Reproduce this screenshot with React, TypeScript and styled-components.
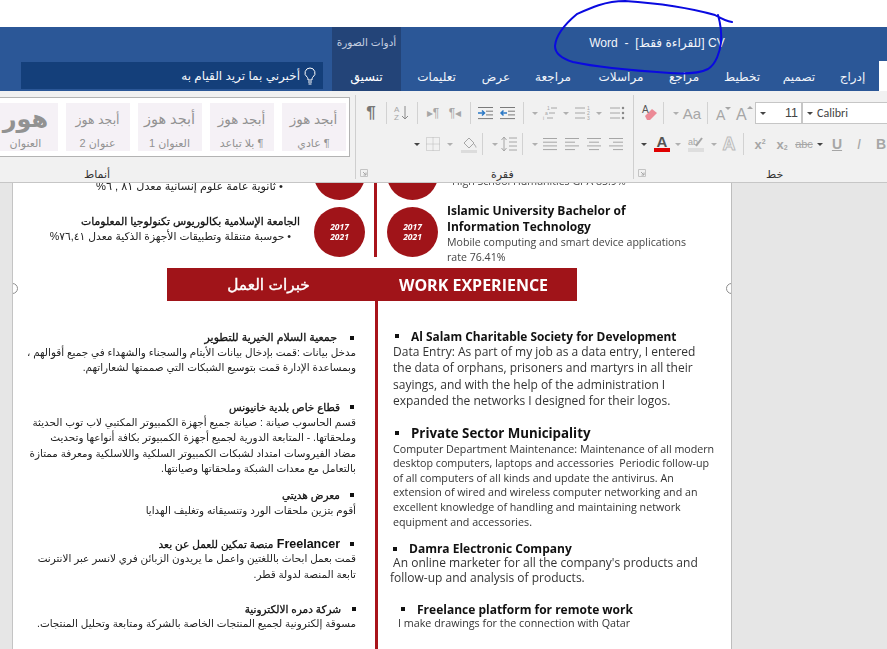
import React from 'react'
import styled, { createGlobalStyle } from 'styled-components'

const Global = createGlobalStyle`
html,body{margin:0;padding:0;width:887px;height:649px;overflow:hidden;background:#fff;}
*{box-sizing:border-box;}
`
const arabic = `"Liberation Sans","DejaVu Sans",sans-serif`
const latin = `"Open Sans","DejaVu Sans",sans-serif`

const Screen = styled.div`
position:relative;
width:887px;
height:649px;
overflow:hidden;
display:flex;
flex-direction:column;
font-family:${arabic};
`
const Blank = styled.div`height:27px;background:#fff;flex:none;`
const Bar = styled.div`
display:flex;
height:64px;
flex:none;
background:#2b5797;
color:#fff;
`
const SearchArea = styled.div`
width:332px;
display:flex;
align-items:flex-end;
padding:0 9px 2px 21px;
`
const Search = styled.div`
width:302px;
height:27px;
background:#143f7a;
display:flex;
align-items:center;
gap:3px;
padding-right:6px;
direction:rtl;
font-size:12px;
color:#f4f6fa;
`
const Context = styled.div`
width:69px;
background:#234478;
display:flex;
flex-direction:column;
align-items:center;
`
const ContextLabel = styled.div`
height:34px;
display:flex;
align-items:center;
direction:rtl;
font-size:10.5px;
color:#c5cfe0;
padding-bottom:4px;
`
const ContextTab = styled.div`
height:30px;
display:flex;
align-items:center;
font-size:12.5px;
color:#fff;
`
const BarMain = styled.div`
flex:1;
display:flex;
flex-direction:column;
`
const Title = styled.div`
height:34px;
display:flex;
align-items:center;
justify-content:center;
padding:0 0 3px 26px;
direction:rtl;
font-size:12.1px;
color:#f2f5fa;
white-space:pre;
`
const Tabs = styled.div`
height:30px;
display:flex;
direction:rtl;
`
const HomeTab = styled.div`width:8px;background:#fff;`
const Tab = styled.div<{ $w: number }>`
width:${p => p.$w}px;
display:flex;
align-items:center;
justify-content:center;
font-size:12px;
color:#f2f5fa;
padding-top:1px;
`

const Ribbon = styled.div`
height:92px;
flex:none;
background:#f1f1f1;
border-bottom:1px solid #c6c6c6;
display:flex;
overflow:hidden;
`
const Group = styled.div<{ $w: number }>`
position:relative;
flex:none;
width:${p => p.$w}px;
display:flex;
flex-direction:column;
`
const GroupSep = styled.div`
position:absolute;
right:0;
top:4px;
bottom:3px;
width:1px;
background:#cfcfcf;
`
const GroupLabel = styled.div<{ $x: number }>`
position:absolute;
top:76px;
left:${p => p.$x}px;
font-size:11px;
color:#333;
line-height:14px;
direction:rtl;
`
const Launcher = styled.svg`
position:absolute;
left:4px;
top:78px;
`
const Gallery = styled.div`
margin:6px 0 0 -59px;
width:409px;
height:60px;
border:1.5px solid #b3b3b3;
background:#fff;
display:flex;
direction:rtl;
gap:8px;
padding:4.5px 3.5px 0;
overflow:hidden;
`
const Style = styled.div`
flex:none;
width:64px;
height:48px;
background:#f5f1f6;
color:#929292;
display:flex;
flex-direction:column;
align-items:center;
white-space:nowrap;
`
const Sample = styled.div<{ $size: number; $bold?: boolean }>`
height:33px;
display:flex;
align-items:center;
font-size:${p => p.$size}px;
font-weight:${p => (p.$bold ? 700 : 400)};
`
const StyleName = styled.div`font-size:11px;line-height:14px;`

const Row = styled.div<{ $pl: number; $mt: number }>`
height:22px;
margin-top:${p => p.$mt}px;
padding-left:${p => p.$pl}px;
display:flex;
align-items:center;
`
const Slot = styled.div<{ $w?: number; $ml?: number; $size?: number; $color?: string; $bold?: boolean; $italic?: boolean }>`
flex:none;
width:${p => p.$w ?? 18}px;
margin-left:${p => p.$ml ?? 0}px;
height:22px;
display:flex;
align-items:center;
justify-content:center;
font-family:"Liberation Sans",sans-serif;
font-size:${p => p.$size ?? 14}px;
font-weight:${p => (p.$bold ? 700 : 400)};
font-style:${p => (p.$italic ? 'italic' : 'normal')};
color:${p => p.$color ?? '#a6a6a6'};
white-space:nowrap;
`
const OutlineA = styled.span`
font-size:18px;
font-weight:700;
color:#f1f1f1;
-webkit-text-stroke:1px #bcbcbc;
`
const Sup = styled.span`font-size:7px;margin-top:-6px;`
const Sub = styled.span`font-size:7px;margin-top:6px;`
const Sep = styled.div`
flex:none;
width:1px;
height:22px;
margin:0 4px;
background:#d2d2d2;
`
const Caret = styled.div<{ $ml?: number; $dark?: boolean }>`
flex:none;
width:10px;
margin-left:${p => p.$ml ?? 0}px;
height:22px;
display:flex;
align-items:center;
justify-content:center;
&::after{
  content:'';
  border-left:3px solid transparent;
  border-right:3px solid transparent;
  border-top:3px solid ${p => (p.$dark ? '#444' : '#b0b0b0')};
}
`
const SizeBox = styled.div`
flex:none;
width:47px;
height:22px;
margin-left:1px;
background:#fff;
border:1px solid #c6c6c6;
display:flex;
align-items:center;
justify-content:space-between;
padding:0 3px 0 2px;
font-family:"Liberation Sans",sans-serif;
font-size:12.5px;
color:#444;
`
const FontBox = styled.div`
flex:none;
width:120px;
height:22px;
background:#fff;
border:1px solid #c6c6c6;
border-right:none;
display:flex;
align-items:center;
gap:2px;
padding-left:2px;
font-family:"Carlito","Open Sans",sans-serif;
font-size:12px;
color:#444;
`

const Doc = styled.div`
flex:1;
min-height:0;
background:#e6e6e6;
padding:0 155px 0 12px;
`
const Page = styled.div`
position:relative;
width:720px;
height:100%;
background:#fff;
border-left:1px solid #c4c4c4;
border-right:1px solid #bdbdbd;
overflow:hidden;
filter:blur(0.3px);
`
const Handle = styled.div<{ $side: 'left' | 'right' }>`
position:absolute;
top:100px;
${p => p.$side}:-6px;
width:11px;
height:11px;
border-radius:50%;
border:1.5px solid #8e8e8e;
background:#fff;
`
const Columns = styled.div<{ $top?: number; $minH?: number }>`
display:grid;
grid-template-columns:361px 1fr;
margin-top:${p => p.$top ?? 0}px;
min-height:${p => p.$minH ?? 0}px;
`
const Side = styled.div<{ $inset?: number }>`
direction:rtl;
padding-right:${p => p.$inset ?? 9}px;
`
const LtrSide = styled.div<{ $pl: number; $ml?: number }>`
direction:ltr;
padding-left:${p => p.$pl}px;
margin-left:${p => p.$ml ?? 0}px;
border-left:3px solid #a8141b;
min-width:0;
`
const EduRow = styled.div<{ $mt?: number; $gap?: number }>`
display:flex;
gap:${p => p.$gap ?? 14}px;
margin-top:${p => p.$mt ?? 0}px;
height:50px;
`
const Badge = styled.div`
flex:none;
width:51px;
height:50px;
border-radius:50%;
background:#a01419;
color:#fff;
direction:ltr;
display:flex;
flex-direction:column;
align-items:center;
justify-content:center;
font-family:${latin};
font-size:8.5px;
font-weight:700;
font-style:italic;
line-height:10.5px;
`
const EduText = styled.div<{ $mt?: number }>`
display:flex;
flex-direction:column;
margin-top:${p => p.$mt ?? 0}px;
`
const EduHead = styled.div`
font-size:10.8px;
-webkit-text-stroke:.3px #111;
line-height:15px;
color:#111;
white-space:nowrap;
`
const EduLine = styled.div<{ $pr: number; $size: number }>`
font-size:${p => p.$size}px;
line-height:15px;
padding-right:${p => p.$pr}px;
color:#222;
white-space:nowrap;
`
const EduTitle = styled.div`
font-family:${latin};
font-size:12px;
font-weight:700;
line-height:16px;
color:#111;
white-space:nowrap;
`
const EduNote = styled.div`
font-family:${latin};
font-size:10.6px;
line-height:15px;
color:#444;
white-space:nowrap;
`
const Banner = styled.div`
display:flex;
height:33px;
width:410px;
margin:11px 0 0 154px;
background:#a01419;
color:#fff;
`
const BannerAr = styled.div`
width:207px;
display:flex;
align-items:center;
justify-content:center;
direction:rtl;
font-size:15.4px;
-webkit-text-stroke:.4px #fff;
padding-right:4px;
`
const BannerEn = styled.div`
width:199px;
display:flex;
align-items:center;
justify-content:center;
font-family:${latin};
font-size:16px;
font-weight:700;
`
const Item = styled.div<{ $mt: number }>`
margin-top:${p => p.$mt}px;
`
const headBase = `
display:flex;
align-items:center;
color:#111;
white-space:nowrap;
&::before{
  content:'';
  flex:none;
  width:4px;
  height:4px;
  background:#111;
}
`
const ArHead = styled.div<{ $bullet: number; $gap: number; $size: number }>`
${headBase}
height:15px;
padding-right:${p => p.$bullet}px;
gap:${p => p.$gap}px;
font-size:${p => p.$size}px;
-webkit-text-stroke:.3px #111;
`
const LatinBit = styled.span`
font-size:12.5px;
font-weight:700;
-webkit-text-stroke:0;
`
const EnHead = styled.div<{ $bullet: number; $gap: number; $size: number; $h: number }>`
${headBase}
height:${p => p.$h}px;
padding-left:${p => p.$bullet}px;
gap:${p => p.$gap}px;
font-family:${latin};
font-size:${p => p.$size}px;
font-weight:700;
`
const ArLine = styled.div`
font-size:10.4px;
line-height:15.4px;
color:#222;
white-space:nowrap;
`
const EnLine = styled.div<{ $size: number; $lh: number; $pad?: number }>`
font-family:${latin};
font-size:${p => p.$size}px;
line-height:${p => p.$lh}px;
margin-left:${p => p.$pad ?? 0}px;
color:#333;
white-space:pre;
`
const Scribble = styled.svg`
position:absolute;
left:0;
top:0;
pointer-events:none;
`

const Ic = ({ children, w = 18, h = 18 }: { children: React.ReactNode; w?: number; h?: number }) => (
  <svg width={w} height={h} viewBox={`0 0 ${w} ${h}`} fill="none">{children}</svg>
)

const TextLines = ({ ys, color = '#a6a6a6' }: { ys: [number, number][]; color?: string }) => (
  <>
    {ys.map(([x1, x2], i) => (
      <line key={i} x1={x1} x2={x2} y1={3.5 + i * 3.7} y2={3.5 + i * 3.7} stroke={color} />
    ))}
  </>
)

const full: [number, number][] = [[2, 16], [2, 16], [2, 16], [2, 16]]
const left: [number, number][] = [[2, 16], [2, 12], [2, 16], [2, 12]]
const center: [number, number][] = [[2, 16], [4, 14], [2, 16], [4, 14]]
const right: [number, number][] = [[2, 16], [6, 16], [2, 16], [6, 16]]

const Launch = () => (
  <Launcher width="8" height="8" viewBox="0 0 8 8" fill="none">
    <path d="M.5 7.5V.5h7v7z" stroke="#c4c4c4" />
    <path d="M3 3l3 3M6 3.5V6H3.5" stroke="#a8a8a8" />
  </Launcher>
)

const styles = [
  { sample: 'أبجد هوز', name: '¶ عادي', size: 13.5 },
  { sample: 'أبجد هوز', name: '¶ بلا تباعد', size: 13.5 },
  { sample: 'أبجد هوز', name: 'العنوان 1', size: 14.5 },
  { sample: 'أبجد هوز', name: 'عنوان 2', size: 12.5 },
  { sample: 'هور', name: 'العنوان', size: 24, bold: true },
]

const tabs: [string, number][] = [
  ['إدراج', 53], ['تصميم', 54], ['تخطيط', 60], ['مراجع', 56],
  ['مراسلات', 70], ['مراجعة', 66], ['عرض', 48], ['تعليمات', 71],
]

const arabicWork: { title: string; lead?: string; mt: number; bullet: number; gap: number; size: number; lines: string[] }[] = [
  { title: 'جمعية السلام الخيرية للتطوير', mt: 29, bullet: 2, gap: 13, size: 11, lines: ['مدخل بيانات :قمت بإدخال بيانات الأيتام والسجناء والشهداء في جميع أقوالهم ،', 'وبمساعدة الإدارة قمت بتوسيع الشبكات التي صممتها لشعاراتهم.'] },
  { title: 'قطاع خاص بلدية خانيونس', mt: 24, bullet: 2, gap: 10, size: 10.4, lines: ['قسم الحاسوب صيانة : صيانة جميع أجهزة الكمبيوتر المكتبي لاب توب الحديثة', 'وملحقاتها. - المتابعة الدورية لجميع أجهزة الكمبيوتر بكافة أنواعها وتحديث', 'مضاد الفيروسات امتداد لشبكات الكمبيوتر السلكية واللاسلكية ومعرفة ممتازة', 'بالتعامل مع معدات الشبكة وملحقاتها وصيانتها.'] },
  { title: 'معرض هديتي', mt: 11.5, bullet: 2, gap: 10, size: 10.5, lines: ['أقوم بتزين ملحقات الورد وتنسيقاته وتغليف الهدايا'] },
  { title: 'منصة تمكين للعمل عن بعد', lead: 'Freelancer', mt: 18, bullet: 2, gap: 10, size: 10.5, lines: ['قمت بعمل ابحاث باللغتين واعمل ما يريدون الزبائن فري لانسر عبر الانترنت', 'تابعة المنصة لدولة قطر.'] },
  { title: 'شركة دمره الالكترونية', mt: 19, bullet: -2, gap: 11, size: 10.5, lines: ['مسوقة إلكترونية لجميع المنتجات الخاصة بالشركة ومتابعة وتحليل المنتجات.'] },
]

const englishWork: { title: string; mt: number; bullet: number; gap: number; head: number; h: number; size: number; lh: number; back?: number; lines: string[] }[] = [
  { title: 'Al Salam Charitable Society for Development', mt: 26, bullet: 2, gap: 12, head: 11.9, h: 17, size: 12, lh: 16.4, lines: ['Data Entry: As part of my job as a data entry, I entered', 'the data of orphans, prisoners and martyrs in all their', 'sayings, and with the help of the administration I', 'expanded the networks I designed for their logos.'] },
  { title: 'Private Sector Municipality', mt: 15, bullet: 2, gap: 12, head: 13.3, h: 17, size: 10.7, lh: 14.6, lines: ['Computer Department Maintenance: Maintenance of all modern', 'desktop computers, laptops and accessories  Periodic follow-up', 'of all computers of all kinds and update the antivirus. An', 'extension of wired and wireless computer networking and an', 'excellent knowledge of handling and maintaining network', 'equipment and accessories.'] },
  { title: 'Damra Electronic Company', mt: 12, bullet: -1, gap: 12, head: 12, h: 15, size: 12, lh: 14.6, back: -3, lines: [' An online marketer for all the company\'s products and', 'follow-up and analysis of products.'] },
  { title: 'Freelance platform for remote work', mt: 17, bullet: 8, gap: 12, head: 12, h: 14, size: 10.75, lh: 14.6, back: 5, lines: ['I make drawings for the connection with Qatar'] },
]

const App = () => {
  return (
    <Screen>
      <Global />
      <Blank />
      <Bar>
        <SearchArea>
          <Search>
            <Ic w={14} h={20}>
              <path d="M7 2a5 5 0 0 0-3 9c.8.7 1 1.5 1 3h4c0-1.500.2-2.300 1-3a5 5 0 0 0-3-9z" stroke="#fff" />
              <path d="M5 16h4M5.500 18h3" stroke="#fff" />
            </Ic>
            <span>أخبرني بما تريد القيام به</span>
          </Search>
        </SearchArea>
        <Context>
          <ContextLabel>أدوات الصورة</ContextLabel>
          <ContextTab>تنسيق</ContextTab>
        </Context>
        <BarMain>
          <Title>CV [للقراءة فقط]  -  Word</Title>
          <Tabs>
            <HomeTab />
            {tabs.map(([label, w]) => <Tab key={label} $w={w}>{label}</Tab>)}
          </Tabs>
        </BarMain>
      </Bar>

      <Ribbon>
        <Group $w={356}>
          <Gallery>
            {styles.map(s => (
              <Style key={s.name}>
                <Sample $size={s.size} $bold={s.bold}>{s.sample}</Sample>
                <StyleName>{s.name}</StyleName>
              </Style>
            ))}
          </Gallery>
          <GroupLabel $x={84}>أنماط</GroupLabel>
          <GroupSep />
        </Group>

        <Group $w={278}>
          <Row $pl={4} $mt={11}>
            <Slot $w={22} $size={17} $bold $color="#777">¶</Slot>
            <Sep />
            <Slot $w={22}>
              <Ic>
                <text x="1" y="8" fontSize="8" fill="#a6a6a6" fontFamily="Liberation Sans">A</text>
                <text x="1" y="16" fontSize="8" fill="#a6a6a6" fontFamily="Liberation Sans">Z</text>
                <path d="M12 2v13M9 12l3 3 3-3" stroke="#8a8a8a" />
              </Ic>
            </Slot>
            <Sep />
            <Slot $w={22} $size={12}>▸¶</Slot>
            <Slot $w={22} $size={12}>¶◂</Slot>
            <Sep />
            <Slot $w={22}>
              <Ic>
                <TextLines ys={[[1, 16], [9, 16], [9, 16], [1, 16]]} color="#7a7a7a" />
                <path d="M1 9h6M5 6.500L7.500 9 5 11.500" stroke="#2b78c5" strokeWidth="1.500" />
              </Ic>
            </Slot>
            <Slot $w={22}>
              <Ic>
                <TextLines ys={[[1, 16], [9, 16], [9, 16], [1, 16]]} color="#7a7a7a" />
                <path d="M8 9H2M4.500 6.500L2 9l2.500 2.500" stroke="#2b78c5" strokeWidth="1.500" />
              </Ic>
            </Slot>
            <Sep />
            <Caret $ml={2} />
            <Slot>
              <Ic>
                <text x="7" y="6" fontSize="5" fill="#a6a6a6">1</text>
                <text x="5" y="11" fontSize="5" fill="#a6a6a6">a</text>
                <text x="3" y="16" fontSize="5" fill="#a6a6a6">i</text>
                <path d="M11 4h6M9 9h6M7 14h6" stroke="#a6a6a6" />
              </Ic>
            </Slot>
            <Caret $ml={3} />
            <Slot $ml={3}>
              <Ic>
                <path d="M1 4h10M1 9h10M1 14h10" stroke="#a6a6a6" />
                <text x="13" y="6" fontSize="5" fill="#a6a6a6">1</text>
                <text x="13" y="11" fontSize="5" fill="#a6a6a6">2</text>
                <text x="13" y="16" fontSize="5" fill="#a6a6a6">3</text>
              </Ic>
            </Slot>
            <Caret $ml={2} />
            <Slot $ml={4}>
              <Ic>
                <path d="M2 4h10M2 9h10M2 14h10" stroke="#a6a6a6" />
                <path d="M15 4h.01M15 9h.01M15 14h.01" stroke="#8a8a8a" strokeWidth="2.500" strokeLinecap="round" />
              </Ic>
            </Slot>
          </Row>
          <Row $pl={56} $mt={9}>
            <Caret $dark />
            <Slot $ml={2}>
              <Ic w={14} h={14}>
                <path d="M.5.5h13v13H.5zM7 .5v13M.5 7h13" stroke="#b8b8b8" strokeDasharray="1 1" />
              </Ic>
            </Slot>
            <Caret $ml={3} />
            <Slot $ml={5}>
              <Ic>
                <path d="M4 8l5-5 5 5-5 5z" stroke="#a6a6a6" />
                <path d="M14 9c1 1.500 2 2.500 2 3.500" stroke="#a6a6a6" />
                <rect x="1" y="15" width="16" height="3" fill="#dcdcdc" />
              </Ic>
            </Slot>
            <Sep />
            <Caret $ml={3} />
            <Slot>
              <Ic>
                <path d="M4 2v14M1.500 5L4 2l2.500 3M1.500 13L4 16l2.500-3" stroke="#a6a6a6" />
                <path d="M9 3h8M9 7h8M9 11h8M9 15h8" stroke="#a6a6a6" />
              </Ic>
            </Slot>
            <Sep />
            <Caret $ml={3} />
            <Slot $ml={1}><Ic><TextLines ys={full} /></Ic></Slot>
            <Slot $ml={4}><Ic><TextLines ys={left} /></Ic></Slot>
            <Slot $ml={4}><Ic><TextLines ys={center} /></Ic></Slot>
            <Slot $ml={4}><Ic><TextLines ys={right} /></Ic></Slot>
          </Row>
          <GroupLabel $x={135}>فقرة</GroupLabel>
          <Launch />
          <GroupSep />
        </Group>

        <Group $w={253}>
          <Row $pl={7} $mt={11}>
            <Slot>
              <Ic>
                <path d="M4 12l7-7 5 4-7 7H6z" fill="#ec8a96" />
                <text x="1" y="9" fontSize="10" fill="#555" fontFamily="Liberation Sans">A</text>
              </Ic>
            </Slot>
            <Sep />
            <Caret $ml={3} />
            <Slot $w={22} $size={15} $color="#a6a6a6">Aa</Slot>
            <Sep />
            <Slot $w={22}>
              <Ic>
                <text x="2" y="16" fontSize="14" fill="#a6a6a6" fontFamily="Liberation Sans">A</text>
                <path d="M11 3l3 3 3-3z" fill="#a6a6a6" />
              </Ic>
            </Slot>
            <Slot $w={20}>
              <Ic>
                <text x="1" y="16" fontSize="16" fill="#a6a6a6" fontFamily="Liberation Sans">A</text>
                <path d="M12 5l3-3 3 3z" fill="#a6a6a6" />
              </Ic>
            </Slot>
            <SizeBox><Caret $dark /><span>11</span></SizeBox>
            <FontBox><Caret $dark /><span>Calibri</span></FontBox>
          </Row>
          <Row $pl={5} $mt={9}>
            <Caret $dark />
            <Slot $w={18} $ml={4}>
              <Ic h={20}>
                <text x="3.500" y="13" fontSize="15" fontWeight="700" fill="#555" fontFamily="Liberation Sans">A</text>
                <rect x="1" y="14" width="16" height="4" fill="#e00000" />
              </Ic>
            </Slot>
            <Caret $ml={2} />
            <Slot $ml={4}>
              <Ic h={20}>
                <text x="1" y="11" fontSize="9" fill="#a6a6a6" fontFamily="Liberation Sans">ab</text>
                <path d="M9 12l6-8" stroke="#a6a6a6" strokeWidth="2" />
                <rect x="1" y="14" width="16" height="4" fill="#dedede" />
              </Ic>
            </Slot>
            <Caret $ml={4} />
            <Slot $w={20}><OutlineA>A</OutlineA></Slot>
            <Sep />
            <Slot $w={16} $ml={4} $size={13} $bold>x<Sup>2</Sup></Slot>
            <Slot $w={16} $ml={6} $size={13} $bold>x<Sub>2</Sub></Slot>
            <Slot $w={18} $ml={5} $size={11}><s>abc</s></Slot>
            <Caret $dark $ml={2} />
            <Slot $w={14} $ml={5} $size={14} $bold><u>U</u></Slot>
            <Slot $w={14} $ml={8} $size={14} $italic>I</Slot>
            <Slot $w={14} $ml={8} $size={14} $bold>B</Slot>
          </Row>
          <GroupLabel $x={132}>خط</GroupLabel>
          <Launch />
        </Group>
      </Ribbon>

      <Doc>
        <Page>
          <Handle $side="left" />
          <Handle $side="right" />
          <Columns $top={-33}>
            <Side>
              <EduRow>
                <Badge><span>2017</span><span>2021</span></Badge>
                <EduText $mt={29}>
                  <EduLine $pr={17} $size={11.2}>• ثانوية عامة علوم إنسانية معدل ٨١ , ٦%</EduLine>
                </EduText>
              </EduRow>
              <EduRow $mt={7}>
                <Badge><span>2017</span><span>2021</span></Badge>
                <EduText $mt={7}>
                  <EduHead>الجامعة الإسلامية بكالوريوس تكنولوجيا المعلومات</EduHead>
                  <EduLine $pr={9} $size={10.7}>• حوسبة متنقلة وتطبيقات الأجهزة الذكية معدل ٧٦,٤١%</EduLine>
                </EduText>
              </EduRow>
            </Side>
            <LtrSide $pl={10}>
              <EduRow>
                <Badge><span>2017</span><span>2021</span></Badge>
                <EduText $mt={24}>
                  <EduNote>High School Humanities GPA 85.9%</EduNote>
                </EduText>
              </EduRow>
              <EduRow $mt={7} $gap={9}>
                <Badge><span>2017</span><span>2021</span></Badge>
                <EduText $mt={-4}>
                  <EduTitle>Islamic University Bachelor of</EduTitle>
                  <EduTitle>Information Technology</EduTitle>
                  <EduNote>Mobile computing and smart device applications</EduNote>
                  <EduNote>rate 76.41%</EduNote>
                </EduText>
              </EduRow>
            </LtrSide>
          </Columns>
          <Banner>
            <BannerAr>خبرات العمل</BannerAr>
            <BannerEn>WORK EXPERIENCE</BannerEn>
          </Banner>
          <Columns $minH={360}>
            <Side $inset={18}>
              {arabicWork.map(item => (
                <Item key={item.title} $mt={item.mt}>
                  <ArHead $bullet={item.bullet} $gap={item.gap} $size={item.size}>
                    <span>{item.lead && <LatinBit>{item.lead} </LatinBit>}{item.title}</span>
                  </ArHead>
                  {item.lines.map(line => <ArLine key={line}>{line}</ArLine>)}
                </Item>
              ))}
            </Side>
            <LtrSide $pl={15} $ml={1}>
              {englishWork.map(item => (
                <Item key={item.title} $mt={item.mt}>
                  <EnHead $bullet={item.bullet} $gap={item.gap} $size={item.head} $h={item.h}>{item.title}</EnHead>
                  {item.lines.map(line => (
                    <EnLine key={line} $size={item.size} $lh={item.lh} $pad={item.back}>{line}</EnLine>
                  ))}
                </Item>
              ))}
            </LtrSide>
          </Columns>
        </Page>
      </Doc>

      <Scribble width="887" height="100" viewBox="0 0 887 100" fill="none">
        <path d="M732 22C725 21 722 19 715 15C690 8 655 3 625 1C605 1 590 8 577 14C565 24 556 34 555 46C555 52 560 58 573 62C600 68 640 71 670 73C685 74 700 73 708 69C716 64 720 52 721 42C722 30 720 22 718 15" stroke="#0a0ae0" strokeWidth="2" strokeLinecap="round" />
      </Scribble>
    </Screen>
  )
}

export default App
